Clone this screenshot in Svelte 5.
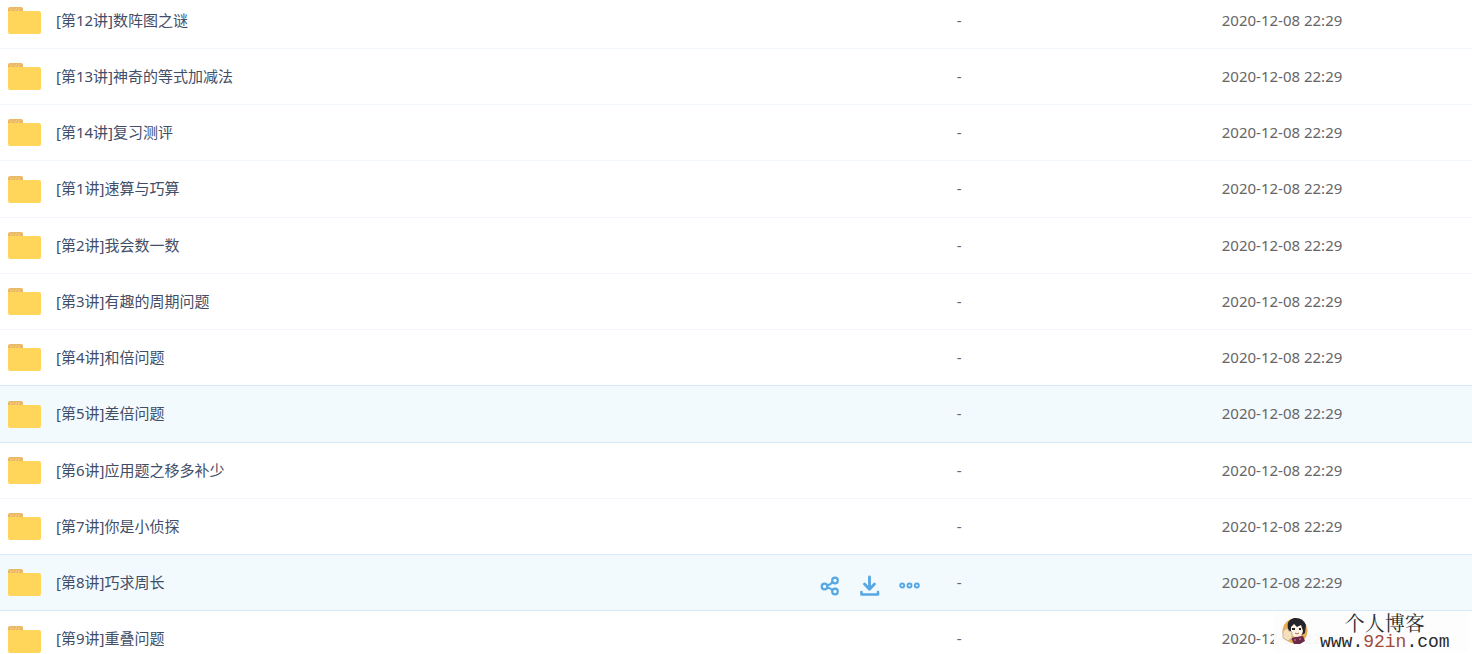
<script lang="ts">
	interface Folder {
		name: string;
		date: string;
		selected?: boolean;
		actions?: boolean;
	}

	const date = '2020-12-08 22:29';

	const folders: Folder[] = [
		{ name: '[第12讲]数阵图之谜', date },
		{ name: '[第13讲]神奇的等式加减法', date },
		{ name: '[第14讲]复习测评', date },
		{ name: '[第1讲]速算与巧算', date },
		{ name: '[第2讲]我会数一数', date },
		{ name: '[第3讲]有趣的周期问题', date },
		{ name: '[第4讲]和倍问题', date },
		{ name: '[第5讲]差倍问题', date, selected: true },
		{ name: '[第6讲]应用题之移多补少', date },
		{ name: '[第7讲]你是小侦探', date },
		{ name: '[第8讲]巧求周长', date, selected: true, actions: true },
		{ name: '[第9讲]重叠问题', date }
	];
</script>

<main>
	<table>
		<colgroup>
			<col class="col-name" />
			<col class="col-size" />
			<col class="col-date" />
		</colgroup>
		<tbody>
			{#each folders as folder (folder.name)}
				<tr class:selected={folder.selected}>
					<td>
						<div class="name">
							<svg class="folder" viewBox="0 0 33 27" aria-hidden="true">
								<path d="M0 8V2q0-2 2-2h11q2 0 2 2v6z" fill="#eab765" />
								<path
									d="M2 2h1M5 2h1M8 2h1M11 2h1M3 3h1M7 3h1M10 3h1"
									stroke="#f6d79a"
								/>
								<path d="M0 4h31q2 0 2 2v19q0 2-2 2H2q-2 0-2-2z" fill="#ffd65a" />
							</svg>
							<a href="#folder">{folder.name}</a>
							{#if folder.actions}
								<div class="actions">
									<button type="button" aria-label="分享">
										<svg viewBox="0 0 20 20">
											<circle cx="4.5" cy="10.5" r="2.8" />
											<circle cx="15" cy="4.5" r="2.8" />
											<circle cx="15" cy="15.5" r="2.8" />
											<path d="M7.2 9.5Q10 9 12.4 6.2M7.2 11.5Q10 12 12.4 14" />
										</svg>
									</button>
									<button type="button" aria-label="下载">
										<svg viewBox="0 0 20 20">
											<path d="M9.5 1v12M4.5 8l5 5.2 5-5.2" stroke-width="2.8" />
											<path d="M1.5 16v2.5H18V16" stroke-width="2.6" />
										</svg>
									</button>
									<button type="button" aria-label="更多">
										<svg viewBox="0 0 20 20">
											<g stroke-width="1.9">
												<circle cx="2.2" cy="9.5" r="2" />
												<circle cx="9.5" cy="9.5" r="2" />
												<circle cx="16.8" cy="9.5" r="2" />
											</g>
										</svg>
									</button>
								</div>
							{/if}
						</div>
					</td>
					<td class="text">-</td>
					<td class="text">{folder.date}</td>
				</tr>
			{/each}
		</tbody>
	</table>

	<aside class="watermark">
		<svg class="avatar" viewBox="0 0 28 28" aria-hidden="true">
			<circle cx="14" cy="14" r="12.5" fill="#e9ae52" />
			<path d="M7 12Q5 3 13 1q9-1 12 7l-1 8-3 2H9z" fill="#24242c" />
			<path d="M10 10l3-3 3 3 4-2 2 6q-1 6-6 6t-6-5z" fill="#fff3e6" />
			<path d="M11 12h3M18 12h2" stroke="#222" stroke-width="2" />
			<path d="M14 16q2 2 4 0" fill="none" stroke="#b56150" />
			<path d="M10 21l5-1 7-1 2 5-5 3h-6z" fill="#6d2948" />
			<path d="M2 14l4-3 2 3 3 1v6l-4 3-5-3z" fill="#f5dfbd" stroke="#c8b294" />
			<path d="M13 23h2M18 22h2" stroke="#d58b9b" />
		</svg>
		<div class="site">
			<strong>个人博客</strong>
			<span>www.<em>92in</em>.com</span>
		</div>
	</aside>
</main>

<style>
	:global(body) {
		margin: 0;
		background: #fff;
		overflow: hidden;
	}

	main {
		position: relative;
		height: 100vh;
		overflow: hidden;
		font: 15px/20px 'Noto Sans', 'Noto Sans CJK SC', sans-serif;
		color: #666;
	}

	table {
		width: 100%;
		margin-top: -7px;
		border-collapse: separate;
		border-spacing: 0;
		table-layout: fixed;
	}

	.col-name {
		width: 65%;
	}

	.col-size {
		width: 18%;
	}

	td {
		box-sizing: border-box;
		height: 56px;
		padding: 0;
		border-bottom: 1px solid #f2f6fd;
	}

	td.text,
	a {
		padding-bottom: 2px;
	}

	/* every fourth row takes up the rounding of the row height */
	tr:nth-child(4n) td {
		height: 57px;
	}

	tr.selected td {
		background: #f3fafe;
		border-bottom-color: #d6e9f9;
	}

	tr:has(+ .selected) td {
		border-bottom-color: #d6e9f9;
	}

	.name {
		display: flex;
		align-items: center;
		padding-left: 8px;
	}

	.folder {
		flex: none;
		width: 33px;
		height: 27px;
		margin-right: 15px;
	}

	a {
		color: #424e67;
		text-decoration: none;
	}

	.actions {
		display: flex;
		gap: 20px;
		margin-left: auto;
		padding: 6px 37px 0 0;
	}

	button {
		width: 20px;
		height: 20px;
		padding: 0;
		border: 0;
		background: none;
		cursor: pointer;
	}

	button svg {
		display: block;
		width: 20px;
		height: 20px;
		overflow: visible;
		fill: none;
		stroke: #56a8e4;
		stroke-width: 2.2;
		stroke-linecap: round;
		stroke-linejoin: round;
	}

	.watermark {
		position: absolute;
		right: 4px;
		bottom: 2px;
		display: flex;
		box-sizing: border-box;
		width: 194px;
		height: 40px;
		padding-left: 7px;
		background: rgba(253, 253, 253, 0.95);
	}

	.avatar {
		width: 28px;
		height: 28px;
		margin: 5px 11px 0 0;
	}

	.site {
		display: flex;
		flex-direction: column;
		align-items: center;
		color: #2a2a2a;
	}

	strong {
		font: 20px/22px 'Noto Serif CJK SC', 'Noto Sans CJK SC', sans-serif;
	}

	.site span {
		font: 18px/16px 'Liberation Mono', monospace;
	}

	em {
		font-style: normal;
		color: #a34a3c;
	}
</style>
